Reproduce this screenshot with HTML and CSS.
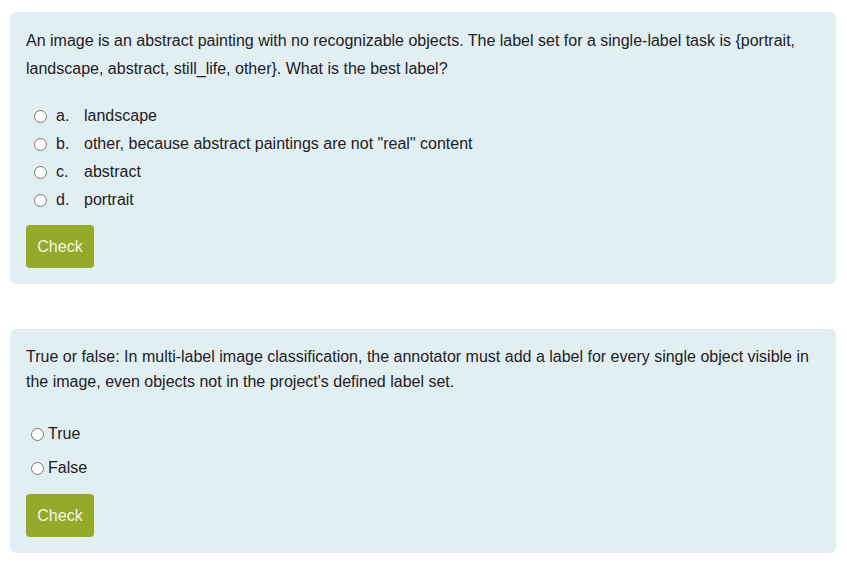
FILE: index.html
```html
<!DOCTYPE html>
<html lang="en">
<head>
  <meta charset="UTF-8" />
  <title>Quiz</title>
  <link rel="stylesheet" href="styles.css">
</head>
<body>
  <div class="quiz">
    <div class="question-card">
      <p class="question-text">An image is an abstract painting with no recognizable objects. The label set for a single-label task is {portrait, landscape, abstract, still_life, other}. What is the best label?</p>
      <div class="options">
        <label class="option"><input type="radio" name="q1"><span class="letter">a.</span><span>landscape</span></label>
        <label class="option"><input type="radio" name="q1"><span class="letter">b.</span><span>other, because abstract paintings are not "real" content</span></label>
        <label class="option"><input type="radio" name="q1"><span class="letter">c.</span><span>abstract</span></label>
        <label class="option"><input type="radio" name="q1"><span class="letter">d.</span><span>portrait</span></label>
      </div>
      <button class="check-btn">Check</button>
    </div>

    <div class="question-card tf">
      <p class="question-text">True or false: In multi-label image classification, the annotator must add a label for every single object visible in the image, even objects not in the project's defined label set.</p>
      <div class="tf-options">
        <label class="tf-option"><input type="radio" name="q2">True</label>
        <label class="tf-option"><input type="radio" name="q2">False</label>
      </div>
      <button class="check-btn">Check</button>
    </div>
  </div>
</body>
</html>
```

FILE: styles.css
```css
* {
  margin: 0;
  padding: 0;
  box-sizing: border-box;
}

body {
  font-family: "Liberation Sans", Arial, sans-serif;
  font-size: 16px;
  color: #1d2125;
  background: #fff;
}

.quiz {
  padding: 12px 11px 0 10px;
  display: flex;
  flex-direction: column;
  gap: 45px;
}

.question-card {
  background-color: #e2eff2;
  border-radius: 6px;
  padding: 15px 16px 16px;
}

.question-text {
  line-height: 28px;
}

.options {
  margin-top: 19px;
  display: flex;
  flex-direction: column;
}

.option {
  display: flex;
  align-items: center;
  height: 28px;
  padding-left: 8px;
}

.option input,
.tf-option input {
  width: 13px;
  height: 13px;
  margin: 0 9px 0 0;
  accent-color: #0f6cbf;
}

.option .letter {
  width: 28px;
}

.check-btn {
  margin-top: 11px;
  background-color: #95a92b;
  color: #f4f7e6;
  border: none;
  border-radius: 4px;
  font-family: inherit;
  font-size: 16px;
  width: 68px;
  height: 43px;
  cursor: pointer;
}

.tf .question-text {
  line-height: 25px;
}

.tf-options {
  margin-top: 23px;
  display: flex;
  flex-direction: column;
}

.tf-option {
  display: flex;
  align-items: center;
  height: 34px;
  padding-left: 5px;
}

.tf-option input {
  margin-right: 4px;
}

.tf .check-btn {
  margin-top: 9px;
}
```
